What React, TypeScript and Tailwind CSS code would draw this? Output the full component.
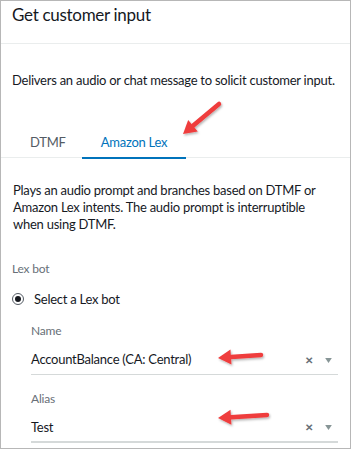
import React from "react";

function Arrow({ x1, y1, x2, y2 }: { x1: number; y1: number; x2: number; y2: number }) {
  const a = Math.atan2(y2 - y1, x2 - x1);
  const L = 13;
  const W = 7.5;
  const bx = x2 - L * Math.cos(a);
  const by = y2 - L * Math.sin(a);
  const px = -Math.sin(a) * W;
  const py = Math.cos(a) * W;
  return (
    <g filter="url(#sh)">
      <line x1={x1} y1={y1} x2={bx} y2={by} stroke="#ef3d3d" strokeWidth={4.5} strokeLinecap="round" />
      <polygon points={`${x2},${y2} ${bx + px},${by + py} ${bx - px},${by - py}`} fill="#ef3d3d" />
    </g>
  );
}

function Select({ value, thick, top }: { value: string; thick?: boolean; top: string }) {
  return (
    <div className={`flex items-center h-[29px] mr-[12px] ${top} ${thick ? "border-b-2 border-[#d5d9d9]" : "border-b border-[#d5d9d9]"}`}>
      <span className="flex-1 text-[13px] tracking-[-0.25px] text-[#16191f]">{value}</span>
      <span className="text-[10px] text-[#687078] font-bold mr-[12px]">✕</span>
      <svg width="7" height="5" viewBox="0 0 8 6" className="mr-[6px]">
        <polygon points="0,0 8,0 4,6" fill="#879596" />
      </svg>
    </div>
  );
}

export default function App() {
  return (
    <div className="relative w-[351px] h-[450px] bg-white overflow-hidden" style={{ fontFamily: 'Lato, "Liberation Sans", sans-serif' }}>
      <div className="w-[351px] h-[449px] border border-[#b7b7b7] flex flex-col">
        <div className="h-[43px] border-b border-[#eaeded] px-[11px] pt-[1px] text-[17px] tracking-[-0.3px] text-[#16191f]">Get customer input</div>
        <p className="px-[11px] mt-[27px] text-[13px] tracking-[-0.25px] text-[#16191f] whitespace-nowrap">Delivers an audio or chat message to solicit customer input.</p>
        <div className="mt-[42px] flex border-b border-[#eaeded] h-[25px] items-start">
          <div className="w-[81px] pl-[29px] text-[13px] tracking-[-0.25px] text-[#545b64]">DTMF</div>
          <div className="w-[104px] text-center text-[13px] tracking-[-0.25px] text-[#0073bb] border-b-2 border-[#0073bb] h-[26px] -mb-px">Amazon Lex</div>
        </div>
        <p className="px-[12px] mt-[24px] text-[13px] tracking-[-0.25px] leading-[17px] text-[#16191f] pr-[20px]">
          Plays an audio prompt and branches based on DTMF or Amazon Lex intents. The audio prompt is interruptible when using DTMF.
        </p>
        <div className="px-[11px] mt-[27px] text-[12px] tracking-[-0.2px] text-[#687078]">Lex bot</div>
        <div className="px-[11px] mt-[12px] flex items-center gap-[10px]">
          <span className="w-[12px] h-[12px] rounded-full border border-[#545b64] flex items-center justify-center">
            <span className="w-[6px] h-[6px] rounded-full bg-[#16191f]" />
          </span>
          <span className="text-[13px] tracking-[-0.25px] text-[#16191f]">Select a Lex bot</span>
        </div>
        <div className="pl-[30px] mt-[13px]">
          <div className="text-[12px] tracking-[-0.2px] text-[#687078]">Name</div>
          <Select value="AccountBalance (CA: Central)" top="mt-[6px]" />
          <div className="text-[12px] tracking-[-0.2px] text-[#687078] mt-[15px]">Alias</div>
          <Select value="Test" thick top="mt-[6px]" />
        </div>
      </div>
      <svg className="absolute inset-0 pointer-events-none" width="351" height="450">
        <defs>
          <filter id="sh" x="-20%" y="-50%" width="140%" height="200%">
            <feDropShadow dx="1" dy="1.5" stdDeviation="1" floodColor="#000" floodOpacity="0.3" />
          </filter>
        </defs>
        <Arrow x1={219} y1={104} x2={183} y2={134} />
        <Arrow x1={261} y1={355} x2={218} y2={358} />
        <Arrow x1={267} y1={415} x2={218} y2={418} />
      </svg>
    </div>
  );
}
